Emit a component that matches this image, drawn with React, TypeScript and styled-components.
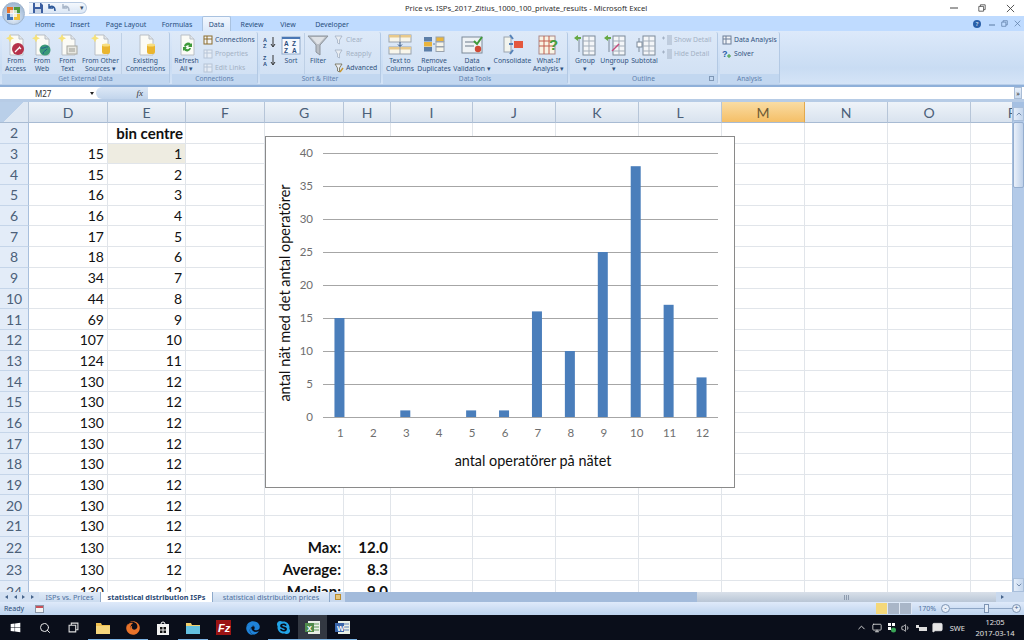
import styled, { createGlobalStyle } from "styled-components";
import { ChevronDown, ChevronUp, MessageSquare, Search, Volume1, Monitor } from "lucide-react";
import { FaEdge, FaFirefox, FaSkype, FaWindows } from "react-icons/fa";
import type { ReactNode } from "react";

const GlobalStyle = createGlobalStyle`
  html, body {
    margin: 0;
    padding: 0;
    background: #fff;
    font-family: "Noto Sans", sans-serif;
  }
  * { box-sizing: border-box; }
`;

const Page = styled.div`
  position: relative;
  width: 1024px;
  height: 640px;
  overflow: hidden;
  display: flex;
  flex-direction: column;
`;

/* ---------- title bar ---------- */
const TitleBar = styled.div`
  height: 16px;
  display: flex;
  align-items: center;
  background: #fff;
  position: relative;
`;
const OfficeButton = styled.div`
  position: absolute;
  left: 2px;
  top: 2px;
  width: 23px;
  height: 23px;
  border-radius: 50%;
  background: radial-gradient(circle at 50% 70%, #e9f1fb 0%, #b4c8e0 55%, #8ea9c6 100%);
  border: 1px solid #9fb4cd;
  display: grid;
  place-items: center;
  z-index: 2;
`;
const Qat = styled.div`
  margin-left: 29px;
  width: 58px;
  height: 12px;
  display: flex;
  align-items: center;
  gap: 4px;
  padding-left: 4px;
  border: 1px solid #b9cbe2;
  border-left: none;
  border-radius: 0 7px 7px 0;
  background: linear-gradient(#f4f8fd, #dbe7f6);
`;
const QatMore = styled.span`
  margin-left: 5px;
  font-size: 7px;
  line-height: 8px;
  color: #3d4f66;
`;
const WindowTitle = styled.div`
  position: absolute;
  left: 405px;
  top: 3px;
  font-size: 7.6px;
  line-height: 10px;
  color: #2e2e2e;
  white-space: nowrap;
`;
const WindowControls = styled.div`
  margin-left: auto;
  display: flex;
  align-items: center;
  gap: 20px;
  padding-right: 9px;
  color: #444;
`;

/* ---------- ribbon ---------- */
const TabBar = styled.div`
  height: 15px;
  display: flex;
  align-items: flex-end;
  padding-left: 27px;
  background: #bfdbff;
`;
const Tab = styled.div<{ $w: number; $active?: boolean }>`
  width: ${({ $w }) => $w}px;
  height: ${({ $active }) => ($active ? 15 : 14)}px;
  margin-left: ${({ $active }) => ($active ? 3 : 0)}px;
  display: flex;
  align-items: center;
  justify-content: center;
  font-size: 7px;
  color: #284e7e;
  background: ${({ $active }) => ($active ? "linear-gradient(#f2f7fe, #dce9fa)" : "transparent")};
  border: ${({ $active }) => ($active ? "1px solid #a9c2e0" : "none")};
  border-bottom: none;
  border-radius: 2px 2px 0 0;
`;
const TabBarRight = styled.div`
  margin-left: auto;
  height: 15px;
  display: flex;
  align-items: center;
  gap: 6px;
  padding-right: 3px;
  color: #5a7aa3;
  font-size: 8px;
`;
const HelpDot = styled.span`
  width: 8px;
  height: 8px;
  border-radius: 50%;
  background: #2a5fa8;
  color: #fff;
  font-size: 6px;
  line-height: 8px;
  text-align: center;
  margin-right: 2px;
`;
const Ribbon = styled.div`
  height: 54px;
  display: flex;
  gap: 2px;
  padding: 1px 0 0 2px;
  background: linear-gradient(#dce9fa 0%, #c9dcf3 70%, #d5e4f7 100%);
  border-bottom: 1px solid #b9cfea;
`;
const Group = styled.div<{ $w: number }>`
  width: ${({ $w }) => $w}px;
  height: 52px;
  display: flex;
  flex-direction: column;
  background: linear-gradient(#dde9f8, #cfdff3);
  border-right: 1px solid #b3c9e4;
  border-radius: 2px;
`;
const GroupBody = styled.div`
  flex: 1;
  display: flex;
  padding-top: 1px;
`;
const GroupFooter = styled.div`
  position: relative;
  height: 10px;
  line-height: 10px;
  text-align: center;
  font-size: 6.6px;
  color: #5f80ac;
  background: #c2d7f0;
`;
const Launcher = styled.span`
  position: absolute;
  right: 3px;
  top: 2px;
  width: 5px;
  height: 5px;
  border: 1px solid #7f97b5;
`;
const BigButtonWrap = styled.div<{ $w: number; $sep?: boolean }>`
  width: ${({ $w }) => $w}px;
  display: flex;
  flex-direction: column;
  align-items: center;
  border-right: ${({ $sep }) => ($sep ? "1px solid #bed0e6" : "none")};
  flex: none;
`;
const BigIcon = styled.div`
  height: 24px;
  display: grid;
  place-items: center;
`;
const BigLabel = styled.div`
  font-size: 6.8px;
  line-height: 8px;
  color: #31527e;
  text-align: center;
  white-space: pre;
`;
const SmallColumn = styled.div<{ $left: number }>`
  margin-left: ${({ $left }) => $left}px;
  display: flex;
  flex-direction: column;
  gap: 1px;
`;
const SmallItem = styled.div<{ $off?: boolean }>`
  height: 13px;
  display: flex;
  align-items: center;
  gap: 2px;
  font-size: 6.8px;
  white-space: nowrap;
  color: ${({ $off }) => ($off ? "#a3b1c4" : "#31527e")};
`;
const SortStack = styled.div`
  width: 16px;
  margin-left: 2px;
  display: flex;
  flex-direction: column;
  gap: 6px;
  padding-top: 3px;
  align-items: center;
  flex: none;
`;

/* ---------- formula bar ---------- */
const FormulaBar = styled.div`
  height: 17px;
  display: flex;
  padding: 2px 2px 3px 0;
  background: linear-gradient(#8fb0d9 0%, #8fb0d9 12%, #fff 12%, #fff 82%, #b7cce6 82%);
`;
const NameBox = styled.div`
  width: 96px;
  display: flex;
  align-items: center;
  padding-left: 35px;
  font-size: 8px;
  color: #333;
  position: relative;
`;
const NameArrow = styled.span`
  position: absolute;
  right: 2px;
  top: 5px;
  border: 2.5px solid transparent;
  border-top: 3px solid #222;
`;
const FxPill = styled.div`
  width: 52px;
  display: flex;
  align-items: center;
  justify-content: flex-end;
  padding-right: 5px;
  border-radius: 7px 0 0 7px;
  background: linear-gradient(#dde8f6, #c2d5ec);
  font-family: "Liberation Serif", serif;
  font-style: italic;
  font-size: 9px;
  color: #333;
`;
const FormulaInput = styled.div`
  flex: 1;
  background: #fff;
`;
const FormulaExpand = styled.div`
  width: 8px;
  display: grid;
  place-items: center;
  background: linear-gradient(#e6effa, #c8d9ee);
  border: 1px solid #a8bcd6;
  color: #333;
  font-size: 7px;
  line-height: 7px;
`;

/* ---------- sheet ---------- */
const COLUMNS = "29px 79px 78px 79px 79px 47px 82px 83px 83px 83px 83px 83px 83px 83px";

const SheetArea = styled.div`
  height: 490px;
  display: flex;
`;
const SheetViewport = styled.div`
  position: relative;
  width: 1012px;
  overflow: hidden;
  background: #fff;
`;
const GridRow = styled.div<{ $h: number }>`
  display: grid;
  grid-template-columns: ${COLUMNS};
  width: 1054px;
  height: ${({ $h }) => $h}px;
`;
const ColHeader = styled.div<{ $active?: boolean }>`
  display: flex;
  align-items: center;
  justify-content: center;
  font-family: "Lato", sans-serif;
  font-size: 14px;
  color: ${({ $active }) => ($active ? "#6d5a34" : "#4b6079")};
  background: ${({ $active }) =>
    $active ? "linear-gradient(#f9dca3, #f5bf67)" : "linear-gradient(#eef3f9, #d9e3ef)"};
  border-right: 1px solid ${({ $active }) => ($active ? "#e2a94e" : "#b6c5d8")};
  border-bottom: 1px solid #a8bbd3;
`;
const Corner = styled(ColHeader)`
  background: linear-gradient(135deg, #b9cfe9 50%, #dfe8f3 50%);
`;
const RowHeader = styled.div`
  display: flex;
  align-items: center;
  justify-content: center;
  font-family: "Lato", sans-serif;
  font-size: 14px;
  color: #4b6079;
  background: #e3ecf8;
  border-right: 1px solid #a8bfdc;
  border-bottom: 1px solid #c5d5e9;
`;
const Cell = styled.div<{ $bold?: boolean; $fill?: boolean }>`
  display: flex;
  align-items: center;
  justify-content: flex-end;
  padding-right: ${({ $bold }) => ($bold ? 2 : 3)}px;
  font-family: "Lato", sans-serif;
  font-size: ${({ $bold }) => ($bold ? 15 : 14)}px;
  font-weight: ${({ $bold }) => ($bold ? 700 : 400)};
  color: #111;
  white-space: nowrap;
  background: ${({ $fill }) => ($fill ? "#eeece1" : "transparent")};
  border-right: 1px solid #e1e5ea;
  border-bottom: 1px solid #e1e5ea;
`;
const ChartBox = styled.div`
  position: absolute;
  left: 265px;
  top: 34px;
  width: 470px;
  height: 352px;
  background: #fff;
  border: 1px solid #8a8a8a;
`;
const VScroll = styled.div`
  width: 12px;
  display: flex;
  flex-direction: column;
  align-items: stretch;
  background: #b3cae8;
  border-left: 1px solid #a5bedd;
`;
const VSplit = styled.div`
  height: 5px;
  background: #a5c0e2;
`;
const ScrollBtn = styled.div`
  height: 14px;
  display: grid;
  place-items: center;
  background: linear-gradient(90deg, #e5eefa, #c4d6ed);
  border: 1px solid #a9bfdb;
  color: #47658c;
`;
const VThumb = styled.div`
  height: 66px;
  margin-top: 1px;
  background: linear-gradient(90deg, #e9f0fa, #bdd0e9);
  border: 1px solid #95aecf;
  border-radius: 2px;
`;
const Spacer = styled.div`
  flex: 1;
`;

/* ---------- sheet tabs ---------- */
const SheetTabs = styled.div`
  height: 10px;
  display: flex;
  align-items: stretch;
  background: #a3bbdb;
`;
const TabNav = styled.div`
  width: 39px;
  display: flex;
  align-items: center;
  justify-content: space-around;
  padding: 0 2px;
  background: #d2e0f2;
`;
const NavArrow = styled.span<{ $flip?: boolean }>`
  width: 0;
  height: 0;
  border: 2.5px solid transparent;
  border-left: ${({ $flip }) => ($flip ? "none" : "3px solid #47658c")};
  border-right: ${({ $flip }) => ($flip ? "3px solid #47658c" : "none")};
`;
const SheetTab = styled.div<{ $w: number; $active?: boolean }>`
  width: ${({ $w }) => $w}px;
  display: flex;
  align-items: center;
  justify-content: center;
  font-size: 7.3px;
  line-height: 10px;
  white-space: nowrap;
  font-weight: ${({ $active }) => ($active ? 700 : 400)};
  color: ${({ $active }) => ($active ? "#2c4a75" : "#4f719f")};
  background: ${({ $active }) => ($active ? "#fff" : "linear-gradient(#e0eaf7, #cbdbef)")};
  border-right: 1px solid #8ea9ca;
`;
const InsertTab = styled.div`
  width: 15px;
  display: grid;
  place-items: center;
  background: #c9d9ee;
`;
const InsertMark = styled.span`
  width: 6px;
  height: 6px;
  background: #e6c77e;
  border: 1px solid #b98b2c;
`;
const TabFill = styled.div`
  width: 352px;
`;
const HScroll = styled.div`
  flex: 1;
  display: flex;
  align-items: center;
  justify-content: center;
  gap: 1px;
  background: linear-gradient(#d9e0e9, #b9c6d6);
`;
const HGrip = styled.span`
  width: 1px;
  height: 5px;
  background: #8c9aad;
`;
const HScrollEnd = styled.div`
  width: 28px;
  display: flex;
  align-items: center;
  padding-left: 5px;
  background: #c9d9ee;
`;

/* ---------- status bar ---------- */
const StatusBar = styled.div`
  height: 13px;
  display: flex;
  align-items: center;
  padding: 0 3px 0 4px;
  background: linear-gradient(#dfeafa, #bdd3ee);
  font-size: 7px;
  color: #2f4e79;
`;
const MacroBox = styled.span`
  margin-left: 11px;
  width: 9px;
  height: 8px;
  background: linear-gradient(#c9505a 30%, #f5f5f5 30%);
  border: 1px solid #8c97a8;
`;
const StatusRight = styled.div`
  margin-left: auto;
  display: flex;
  align-items: center;
`;
const ViewBtn = styled.span<{ $on?: boolean }>`
  width: 12px;
  height: 11px;
  background: ${({ $on }) => ($on ? "#f4d87a" : "#a9b6c8")};
  border-right: 1px solid #dfe7f2;
`;
const Zoom = styled.span`
  margin: 0 5px 0 6px;
  color: #4f719f;
`;
const ZoomRound = styled.span`
  width: 9px;
  height: 9px;
  border-radius: 50%;
  border: 1px solid #7d94b3;
  background: #e7eef8;
  color: #3a5a85;
  font-size: 7px;
  line-height: 6px;
  text-align: center;
`;
const ZoomTrack = styled.span`
  position: relative;
  width: 62px;
  height: 1px;
  background: #8ea6c6;
`;
const ZoomThumb = styled.span`
  position: absolute;
  left: 34px;
  top: -4px;
  width: 5px;
  height: 9px;
  background: #e5edf8;
  border: 1px solid #7d94b3;
`;

/* ---------- task bar ---------- */
const TaskBar = styled.div`
  height: 25px;
  display: flex;
  align-items: stretch;
  background: #0a0e1a;
`;
const TaskSlot = styled.div<{ $w: number; $running?: boolean; $active?: boolean }>`
  width: ${({ $w }) => $w}px;
  flex: none;
  display: grid;
  place-items: center;
  color: #e8e8e8;
  background: ${({ $active }) => ($active ? "#333842" : "transparent")};
  box-shadow: ${({ $running }) => ($running ? "inset 0 -1px 0 #7fb6e6" : "none")};
`;
const Tray = styled.div`
  margin-left: auto;
  display: flex;
  align-items: center;
  gap: 5px;
  color: #e2e2e2;
  padding-right: 8px;
`;
const TrayText = styled.span`
  font-size: 7.5px;
  margin: 0 4px 0 2px;
`;
const Clock = styled.div`
  width: 42px;
  text-align: center;
  font-size: 7.5px;
  line-height: 11px;
  white-space: nowrap;
`;

/* ---------- drawn icons ---------- */
function Doc({ children, star = true }: { children?: ReactNode; star?: boolean }) {
  return (
    <svg width="24" height="24" viewBox="0 0 24 24">
      <path d="M6 2h9l4 4v16H6z" fill="#fbfbf6" stroke="#b9bfc6" />
      <path d="M15 2v4h4" fill="#e2e6ea" stroke="#b9bfc6" />
      {star && <path d="M6 1l1.3 3L10 5.2 7.3 6.4 6 9.5 4.7 6.4 2 5.2l2.7-1.2z" fill="#f6e27a" />}
      {children}
    </svg>
  );
}
const AccessDoc = () => (
  <Doc>
    <circle cx="14" cy="16" r="6" fill="#b6324a" />
    <path d="M11 19l5-5m-1 0l2 2" stroke="#fff" strokeWidth="1.3" />
  </Doc>
);
const WebDoc = () => (
  <Doc>
    <circle cx="15" cy="17" r="5.5" fill="#3c9a78" />
    <path d="M11 15c3 1 5-2 7-1M13 21c0-3 3-3 4-5" stroke="#1f5f8c" fill="none" />
  </Doc>
);
const TextDoc = () => (
  <Doc>
    <rect x="11" y="13" width="10" height="8" fill="#e8e8e2" stroke="#a8a8a0" />
    <path d="M13 16h6M13 18h6" stroke="#9a9a92" />
  </Doc>
);
const DbDoc = ({ star = true }: { star?: boolean }) => (
  <Doc star={star}>
    <rect x="13" y="11" width="8" height="10" rx="2" fill="#eab52f" />
    <ellipse cx="17" cy="12" rx="4" ry="1.6" fill="#f7de80" />
  </Doc>
);
const RefreshDoc = () => (
  <Doc star={false}>
    <path d="M9 13a4 4 0 0 1 7-2l1-1v4h-4l1.300-1.300A2.500 2.500 0 0 0 10.500 14zM16 15a4 4 0 0 1-7 2l-1 1v-4h4l-1.300 1.300a2.500 2.500 0 0 0 3.800-.3z" fill="#3f9a3a" />
  </Doc>
);
const TableBlock = ({ x, y, w = 20, h = 7 }: { x: number; y: number; w?: number; h?: number }) => (
  <g>
    <rect x={x} y={y} width={w} height={h} fill="#f8f6ec" stroke="#9aa3ae" />
    <rect x={x} y={y} width={w} height={2.5} fill="#e8c98c" />
    <path d={`M${x + w / 2} ${y}v${h}`} stroke="#9aa3ae" />
  </g>
);
const Svg24 = ({ children }: { children: ReactNode }) => (
  <svg width="24" height="24" viewBox="0 0 24 24">
    {children}
  </svg>
);
const TextColumnsIcon = () => (
  <Svg24>
    <TableBlock x={1} y={2} w={22} h={7} />
    <TableBlock x={1} y={14} w={22} h={7} />
    <path d="M12 9v4M10 11.500l2 2 2-2" stroke="#2a4d7d" fill="none" />
  </Svg24>
);
const DuplicatesIcon = () => (
  <Svg24>
    {[4, 9, 14].map((y) => (
      <rect key={y} x="2" y={y} width="8" height="4.500" fill={y === 9 ? "#e9b43d" : "#5d7fa8"} />
    ))}
    {[4, 9, 14].map((y) => (
      <rect key={y} x="14" y={y} width="8" height="4.500" fill={y === 4 ? "#e9b43d" : "#f6f4e8"} stroke="#9aa3ae" />
    ))}
    <path d="M11 11h2" stroke="#5d7fa8" />
  </Svg24>
);
const ValidationIcon = () => (
  <Svg24>
    <rect x="2" y="4" width="20" height="16" fill="#eef2f5" stroke="#7d8a99" />
    <path d="M5 9h10M5 13h9" stroke="#6d7a8a" />
    <path d="M14 8l3 3 5-7" stroke="#3f9a3a" strokeWidth="2" fill="none" />
    <circle cx="18" cy="16" r="3.200" fill="#cf4a35" />
  </Svg24>
);
const ConsolidateIcon = () => (
  <Svg24>
    <rect x="3" y="4" width="7" height="15" fill="#f2f4ee" stroke="#9aa3ae" />
    <rect x="13" y="8" width="9" height="7" fill="#e4583e" />
    <path d="M9 2l3 4M9 21l3-4M8 11h4" stroke="#5582b9" strokeWidth="2" />
  </Svg24>
);
const WhatIfIcon = () => (
  <Svg24>
    <rect x="2" y="3" width="16" height="18" fill="#f8f3e4" stroke="#a88" />
    <path d="M2 8h16M2 13h16M7 3v18M12 3v18" stroke="#c25b4a" />
    <text x="12" y="17" fontSize="15" fontWeight="700" fill="#45a03e" fontFamily="Liberation Sans">?</text>
  </Svg24>
);
const GroupIcon = ({ kind }: { kind: "group" | "ungroup" | "subtotal" }) => (
  <Svg24>
    <rect x="10" y="3" width="12" height="19" fill="#f4f6f8" stroke="#7d8a99" />
    <path d="M10 8h12M10 13h12M10 18h12M16 3v19" stroke="#a3aebb" />
    <path d="M6 5v14" stroke="#7d8a99" />
    {kind !== "subtotal" && <path d="M1 5l4-3v2h3v2H5v2z" fill="#66a843" />}
    {kind === "ungroup" && <path d="M9 18l7-7" stroke="#c64a7c" strokeWidth="1.500" />}
    {kind === "subtotal" && <rect x="4" y="9" width="5" height="5" fill="#fff" stroke="#7d8a99" />}
  </Svg24>
);
const FilterIcon = () => (
  <Svg24>
    <path d="M2 3h20l-8 9v10l-4-3v-7z" fill="#b9bec4" stroke="#8d949c" />
    <path d="M5 4h14l-6 7h-2z" fill="#dfe2e6" />
  </Svg24>
);
const SortBox = () => (
  <svg width="20" height="20" viewBox="0 0 20 20">
    <rect x="1" y="2" width="18" height="17" fill="#f6f9fd" stroke="#8fa9ca" />
    <rect x="1" y="2" width="18" height="2" fill="#4a77b4" />
    <text x="3" y="11" fontSize="6.500" fontWeight="700" fill="#2a4d7d" fontFamily="Liberation Sans">A</text>
    <text x="11" y="11" fontSize="6.500" fontWeight="700" fill="#2a4d7d" fontFamily="Liberation Sans">Z</text>
    <text x="3" y="18" fontSize="6.500" fontWeight="700" fill="#2a4d7d" fontFamily="Liberation Sans">Z</text>
    <text x="11" y="18" fontSize="6.500" fontWeight="700" fill="#2a4d7d" fontFamily="Liberation Sans">A</text>
  </svg>
);
const SortMini = ({ top, bottom }: { top: string; bottom: string }) => (
  <svg width="14" height="12" viewBox="0 0 14 12">
    <text x="0" y="5.500" fontSize="5.500" fontWeight="700" fill="#2a4d7d" fontFamily="Liberation Sans">{top}</text>
    <text x="0" y="11.500" fontSize="5.500" fontWeight="700" fill="#2a4d7d" fontFamily="Liberation Sans">{bottom}</text>
    <path d="M10 1v9M8 8l2 3 2-3" stroke="#333" fill="none" />
  </svg>
);
const Mini = ({ color, faded }: { color: string; faded?: boolean }) => (
  <svg width="10" height="10" viewBox="0 0 10 10" opacity={faded ? 0.6 : 1}>
    <rect x="1" y="1" width="8" height="8" fill="#f2f4f7" stroke={color} />
    <path d="M1 4h8M4 1v8" stroke={color} />
  </svg>
);
const MiniFunnel = ({ color, mark }: { color: string; mark?: string }) => (
  <svg width="10" height="10" viewBox="0 0 10 10">
    <path d="M1 1h7L5.500 5v4L3.500 8V5z" fill="#e9edf2" stroke={color} strokeWidth="0.800" />
    {mark && <path d="M6 9l3-4" stroke={mark} strokeWidth="1.400" />}
  </svg>
);
const MiniOutline = () => (
  <svg width="10" height="10" viewBox="0 0 10 10">
    <path d="M0 3h3M1.500 1.500v3M5 1h5M5 3h5M5 5h5M5 7h5M5 9h5" stroke="#a3b1c4" />
  </svg>
);
const SolverIcon = () => (
  <svg width="10" height="10" viewBox="0 0 10 10">
    <text x="0" y="8" fontSize="9" fontWeight="700" fill="#2a5fa8" fontFamily="Liberation Sans">?</text>
    <path d="M5 7h4M7 5v4" stroke="#3f9a3a" />
  </svg>
);
const OfficeLogo = () => (
  <svg width="15" height="15" viewBox="0 0 15 15">
    <rect x="1" y="1" width="6" height="6" fill="#e8762d" />
    <rect x="8" y="1" width="6" height="6" fill="#4f9a3e" />
    <rect x="1" y="8" width="6" height="6" fill="#3e73b8" />
    <rect x="8" y="8" width="6" height="6" fill="#f0c23a" />
    <rect x="4" y="4" width="7" height="7" fill="#fff" opacity="0.75" />
  </svg>
);
const SaveIcon = () => (
  <svg width="10" height="10" viewBox="0 0 10 10">
    <path d="M0 0h8l2 2v8H0z" fill="#3b5ea0" />
    <rect x="2" y="0" width="5" height="4" fill="#e9eef6" />
    <rect x="2" y="6" width="6" height="4" fill="#c8d4e6" />
  </svg>
);
const UndoIcon = ({ color }: { color: string }) => (
  <svg width="10" height="10" viewBox="0 0 10 10">
    <path d="M2 1v4h4M2 5c2-3 6-2 6 3" stroke={color} strokeWidth="1.500" fill="none" />
  </svg>
);
const Cross = ({ size, color }: { size: number; color: string }) => (
  <svg width={size} height={size} viewBox="0 0 10 10">
    <path d="M1 1l8 8M9 1l-8 8" stroke={color} strokeWidth="1" />
  </svg>
);
const Restore = ({ size, color }: { size: number; color: string }) => (
  <svg width={size} height={size} viewBox="0 0 10 10">
    <path d="M1 3h6v6H1zM3 3V1h6v6H7" stroke={color} fill="none" />
  </svg>
);
const FolderApp = ({ top, body }: { top: string; body: string }) => (
  <svg width="14" height="12" viewBox="0 0 14 12">
    <path d="M0 1h5l1 2h8v9H0z" fill={top} />
    <rect x="0" y="4" width="14" height="8" fill={body} />
  </svg>
);
const StoreIcon = () => (
  <svg width="12" height="14" viewBox="0 0 12 14">
    <path d="M4 3a2 2 0 0 1 4 0" stroke="#fff" fill="none" />
    <path d="M0 3h12v11H0z" fill="#f2f2f2" />
    <path d="M3 6h2.500v2.500H3zM6.500 6H9v2.500H6.500zM3 9.500h2.500V12H3zM6.500 9.500H9V12H6.500z" fill="#111" />
  </svg>
);
const FzIcon = () => (
  <svg width="15" height="15" viewBox="0 0 15 15">
    <rect width="15" height="15" fill="#9a1414" />
    <text x="2" y="12" fontSize="11" fontWeight="700" fontStyle="italic" fill="#fff" fontFamily="Liberation Sans">Fz</text>
  </svg>
);
const OfficeApp = ({ bg, fg, mark }: { bg: string; fg: string; mark: string }) => (
  <svg width="15" height="15" viewBox="0 0 15 15">
    <rect x="3" y="1" width="12" height="13" fill="#e9efe6" />
    <path d="M9 4h5M9 7h5M9 10h5" stroke={fg} />
    <rect x="0" y="3" width="9" height="9" fill={bg} />
    <text x="2" y="10.500" fontSize="7.500" fontWeight="700" fill="#fff" fontFamily="Liberation Sans">{mark}</text>
  </svg>
);

/* ---------- data ---------- */
const HEADERS = ["D", "E", "F", "G", "H", "I", "J", "K", "L", "M", "N", "O", "P"];
const D_VALUES = [15, 15, 16, 16, 17, 18, 34, 44, 69, 107, 124, 130, 130, 130, 130, 130, 130, 130, 130, 130, 130, 130];
const E_VALUES = [1, 2, 3, 4, 5, 6, 7, 8, 9, 10, 11, 12, 12, 12, 12, 12, 12, 12, 12, 12, 12, 12];
const STATS: Record<number, [string, string]> = {
  22: ["Max:", "12.0"],
  23: ["Average:", "8.3"],
  24: ["Median:", "9.0"],
};
const BARS = [15, 0, 1, 0, 1, 1, 16, 10, 25, 38, 17, 6];

function BigButton({ w, sep, icon, label }: { w: number; sep?: boolean; icon: ReactNode; label: string }) {
  return (
    <BigButtonWrap $w={w} $sep={sep}>
      <BigIcon>{icon}</BigIcon>
      <BigLabel>{label}</BigLabel>
    </BigButtonWrap>
  );
}

function DistributionChart() {
  // chart-local coordinates, border excluded
  const left = 57;
  const right = 452;
  const base = 280;
  const unit = 6.6;
  const step = (right - left) / 12;
  return (
    <svg width="468" height="350" viewBox="0 0 468 350">
      {[0, 5, 10, 15, 20, 25, 30, 35, 40].map((v) => (
        <g key={v}>
          <line x1={left} x2={right} y1={base - v * unit + 0.5} y2={base - v * unit + 0.5} stroke="#a6a6a6" />
          <text x={47} y={base - v * unit + 4} textAnchor="end" fontFamily="Lato" fontSize="11.500" fill="#6e6e6e">
            {v}
          </text>
        </g>
      ))}
      {BARS.map((v, i) => (
        <g key={i}>
          {v > 0 && (
            <rect x={left + step * (i + 0.5) - 5} y={base - v * unit} width={10} height={v * unit} fill="#4a7ebb" />
          )}
          <text x={left + step * (i + 0.5) + 1} y={300} textAnchor="middle" fontFamily="Lato" fontSize="11.500" fill="#6e6e6e">
            {i + 1}
          </text>
        </g>
      ))}
      <text x={267} y={329} textAnchor="middle" fontFamily="Lato" fontSize="14.400" fill="#111">
        antal operatörer på nätet
      </text>
      <text
        transform="translate(24 156) rotate(-90)"
        textAnchor="middle"
        fontFamily="Lato"
        fontSize="14.500"
        fill="#111"
      >
        antal nät med det antal operatörer
      </text>
    </svg>
  );
}

function SheetRow({ n, h }: { n: number; h: number }) {
  const idx = n - 3;
  const stat = STATS[n];
  return (
    <GridRow $h={h}>
      <RowHeader>{n}</RowHeader>
      <Cell>{n === 2 ? "" : n === 24 ? 130 : D_VALUES[idx]}</Cell>
      <Cell $bold={n === 2} $fill={n === 3}>
        {n === 2 ? "bin centre" : n === 24 ? 12 : E_VALUES[idx]}
      </Cell>
      <Cell />
      <Cell $bold>{stat?.[0]}</Cell>
      <Cell $bold>{stat?.[1]}</Cell>
      {HEADERS.slice(5).map((c) => (
        <Cell key={c} />
      ))}
    </GridRow>
  );
}

export default function App() {
  const rows = Array.from({ length: 23 }, (_, i) => i + 2);
  return (
    <Page>
      <GlobalStyle />
      <OfficeButton>
        <OfficeLogo />
      </OfficeButton>
      <TitleBar>
        <Qat>
          <SaveIcon />
          <UndoIcon color="#2f5a9a" />
          <UndoIcon color="#a9b7c9" />
          <QatMore>▾</QatMore>
        </Qat>
        <WindowTitle>Price vs. ISPs_2017_Zitius_1000_100_private_results - Microsoft Excel</WindowTitle>
        <WindowControls>
          <svg width="8" height="8" viewBox="0 0 8 8">
            <path d="M0 4h8" stroke="#444" />
          </svg>
          <Restore size={8} color="#444" />
          <Cross size={9} color="#444" />
        </WindowControls>
      </TitleBar>

      <TabBar>
        <Tab $w={36}>Home</Tab>
        <Tab $w={34}>Insert</Tab>
        <Tab $w={58}>Page Layout</Tab>
        <Tab $w={44}>Formulas</Tab>
        <Tab $w={29} $active>
          Data
        </Tab>
        <Tab $w={42}>Review</Tab>
        <Tab $w={30}>View</Tab>
        <Tab $w={58}>Developer</Tab>
        <TabBarRight>
          <HelpDot>?</HelpDot>
          <svg width="6" height="6" viewBox="0 0 6 6">
            <path d="M0 4h6" stroke="#5a7aa3" />
          </svg>
          <Restore size={7} color="#5a7aa3" />
          <Cross size={7} color="#5a7aa3" />
        </TabBarRight>
      </TabBar>

      <Ribbon>
        <Group $w={168}>
          <GroupBody>
            <BigButton w={27} icon={<AccessDoc />} label={"From\nAccess"} />
            <BigButton w={26} icon={<WebDoc />} label={"From\nWeb"} />
            <BigButton w={25} icon={<TextDoc />} label={"From\nText"} />
            <BigButton w={42} sep icon={<DbDoc />} label={"From Other\nSources ▾"} />
            <BigButton w={47} icon={<DbDoc star={false} />} label={"Existing\nConnections"} />
          </GroupBody>
          <GroupFooter>Get External Data</GroupFooter>
        </Group>
        <Group $w={86}>
          <GroupBody>
            <BigButton w={29} icon={<RefreshDoc />} label={"Refresh\nAll ▾"} />
            <SmallColumn $left={2}>
              <SmallItem>
                <Mini color="#8b6d2c" />
                Connections
              </SmallItem>
              <SmallItem $off>
                <Mini color="#a3b1c4" faded />
                Properties
              </SmallItem>
              <SmallItem $off>
                <Mini color="#a3b1c4" faded />
                Edit Links
              </SmallItem>
            </SmallColumn>
          </GroupBody>
          <GroupFooter>Connections</GroupFooter>
        </Group>
        <Group $w={121}>
          <GroupBody>
            <SortStack>
              <SortMini top="A" bottom="Z" />
              <SortMini top="Z" bottom="A" />
            </SortStack>
            <BigButton w={27} sep icon={<SortBox />} label={"Sort"} />
            <BigButton w={26} icon={<FilterIcon />} label={"Filter"} />
            <SmallColumn $left={3}>
              <SmallItem $off>
                <MiniFunnel color="#a3b1c4" />
                Clear
              </SmallItem>
              <SmallItem $off>
                <MiniFunnel color="#a3b1c4" />
                Reapply
              </SmallItem>
              <SmallItem>
                <MiniFunnel color="#6f6a52" mark="#c9962c" />
                Advanced
              </SmallItem>
            </SmallColumn>
          </GroupBody>
          <GroupFooter>Sort &amp; Filter</GroupFooter>
        </Group>
        <Group $w={185}>
          <GroupBody>
            <BigButton w={34} icon={<TextColumnsIcon />} label={"Text to\nColumns"} />
            <BigButton w={34} icon={<DuplicatesIcon />} label={"Remove\nDuplicates"} />
            <BigButton w={42} icon={<ValidationIcon />} label={"Data\nValidation ▾"} />
            <BigButton w={39} icon={<ConsolidateIcon />} label={"Consolidate"} />
            <BigButton w={33} icon={<WhatIfIcon />} label={"What-If\nAnalysis ▾"} />
          </GroupBody>
          <GroupFooter>Data Tools</GroupFooter>
        </Group>
        <Group $w={148}>
          <GroupBody>
            <BigButton w={30} icon={<GroupIcon kind="group" />} label={"Group\n▾"} />
            <BigButton w={29} icon={<GroupIcon kind="ungroup" />} label={"Ungroup\n▾"} />
            <BigButton w={31} icon={<GroupIcon kind="subtotal" />} label={"Subtotal"} />
            <SmallColumn $left={2}>
              <SmallItem $off>
                <MiniOutline />
                Show Detail
              </SmallItem>
              <SmallItem $off>
                <MiniOutline />
                Hide Detail
              </SmallItem>
            </SmallColumn>
          </GroupBody>
          <GroupFooter>
            Outline
            <Launcher />
          </GroupFooter>
        </Group>
        <Group $w={60}>
          <GroupBody>
            <SmallColumn $left={2}>
              <SmallItem>
                <Mini color="#6d7f98" />
                Data Analysis
              </SmallItem>
              <SmallItem>
                <SolverIcon />
                Solver
              </SmallItem>
            </SmallColumn>
          </GroupBody>
          <GroupFooter>Analysis</GroupFooter>
        </Group>
      </Ribbon>

      <FormulaBar>
        <NameBox>
          M27
          <NameArrow />
        </NameBox>
        <FxPill>fx</FxPill>
        <FormulaInput />
        <FormulaExpand>»</FormulaExpand>
      </FormulaBar>

      <SheetArea>
        <SheetViewport>
          <GridRow $h={21}>
            <Corner />
            {HEADERS.map((h) => (
              <ColHeader key={h} $active={h === "M"}>
                {h}
              </ColHeader>
            ))}
          </GridRow>
          {rows.map((n) => (
            <SheetRow key={n} n={n} h={n >= 22 ? 22 : 20.7} />
          ))}
          <ChartBox>
            <DistributionChart />
          </ChartBox>
        </SheetViewport>
        <VScroll>
          <VSplit />
          <ScrollBtn>
            <ChevronUp size={8} />
          </ScrollBtn>
          <VThumb />
          <Spacer />
          <ScrollBtn>
            <ChevronDown size={8} />
          </ScrollBtn>
        </VScroll>
      </SheetArea>

      <SheetTabs>
        <TabNav>
          <NavArrow $flip />
          <NavArrow $flip />
          <NavArrow />
          <NavArrow />
        </TabNav>
        <SheetTab $w={62}>ISPs vs. Prices</SheetTab>
        <SheetTab $w={112} $active>
          statistical distribution ISPs
        </SheetTab>
        <SheetTab $w={117}>statistical distribution prices</SheetTab>
        <InsertTab>
          <InsertMark />
        </InsertTab>
        <TabFill />
        <HScroll>
          <HGrip />
          <HGrip />
          <HGrip />
        </HScroll>
        <HScrollEnd>
          <NavArrow />
        </HScrollEnd>
      </SheetTabs>

      <StatusBar>
        Ready
        <MacroBox />
        <StatusRight>
          <ViewBtn $on />
          <ViewBtn />
          <ViewBtn />
          <Zoom>170%</Zoom>
          <ZoomRound>-</ZoomRound>
          <ZoomTrack>
            <ZoomThumb />
          </ZoomTrack>
          <ZoomRound>+</ZoomRound>
        </StatusRight>
      </StatusBar>

      <TaskBar>
        <TaskSlot $w={30}>
          <FaWindows size={11} color="#fff" />
        </TaskSlot>
        <TaskSlot $w={29}>
          <Search size={12} />
        </TaskSlot>
        <TaskSlot $w={29}>
          <Restore size={11} color="#ddd" />
        </TaskSlot>
        <TaskSlot $w={30} $running>
          <FolderApp top="#f0c050" body="#f6d67c" />
        </TaskSlot>
        <TaskSlot $w={30} $running>
          <FaFirefox size={14} color="#e8722a" />
        </TaskSlot>
        <TaskSlot $w={30}>
          <StoreIcon />
        </TaskSlot>
        <TaskSlot $w={30} $running>
          <FolderApp top="#f2cf6a" body="#63c0e0" />
        </TaskSlot>
        <TaskSlot $w={30}>
          <FzIcon />
        </TaskSlot>
        <TaskSlot $w={30}>
          <FaEdge size={14} color="#1f82d8" />
        </TaskSlot>
        <TaskSlot $w={30} $running>
          <FaSkype size={15} color="#22a4e8" />
        </TaskSlot>
        <TaskSlot $w={29} $running $active>
          <OfficeApp bg="#4f8a4a" fg="#5e9a58" mark="X" />
        </TaskSlot>
        <TaskSlot $w={30} $running>
          <OfficeApp bg="#3a64a8" fg="#5a80bb" mark="W" />
        </TaskSlot>
        <Tray>
          <ChevronUp size={11} />
          <Monitor size={10} />
          <svg width="9" height="10" viewBox="0 0 9 10">
            <rect x="1" y="0" width="3" height="3" fill="#fff" />
            <rect x="5" y="0" width="3" height="3" fill="#fff" />
            <rect x="1" y="4" width="3" height="3" fill="#fff" />
            <circle cx="6.500" cy="7" r="2.500" fill="#3aa657" />
          </svg>
          <Volume1 size={10} />
          <svg width="11" height="8" viewBox="0 0 11 8">
            <rect x="0" y="1" width="3" height="3" fill="#ddd" />
            <rect x="3" y="3" width="8" height="4" fill="#ddd" />
          </svg>
          <MessageSquare size={11} fill="#e6e6e6" />
          <TrayText>SWE</TrayText>
          <Clock>
            12:05
            <br />
            2017-03-14
          </Clock>
        </Tray>
      </TaskBar>
    </Page>
  );
}
